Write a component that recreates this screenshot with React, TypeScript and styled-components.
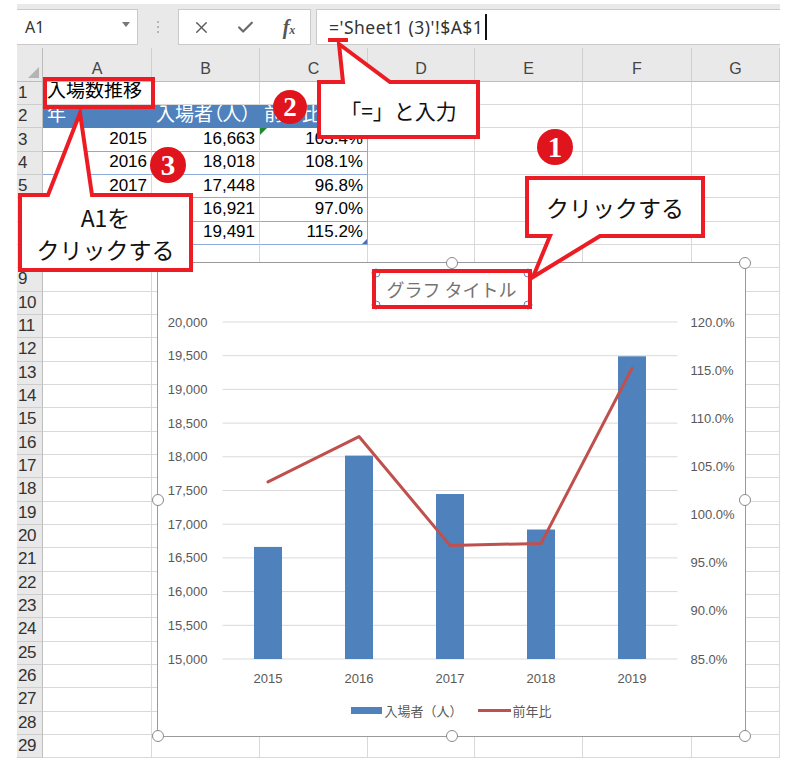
import React from 'react'
import styled, { createGlobalStyle } from 'styled-components'
import { X, Check } from 'lucide-react'

const RED = '#ec1c24'
const COLS = [26, 109, 108, 108, 107, 108, 109, 88]
const LETTERS = ['A', 'B', 'C', 'D', 'E', 'F', 'G']
const ROWS = 29

const GlobalStyle = createGlobalStyle`
  html, body {
    margin: 0;
    padding: 0;
    background: #fff;
  }
  body {
    font-family: "Liberation Sans", "Noto Sans CJK JP", sans-serif;
  }
`

// データ
const years = ['2015', '2016', '2017', '2018', '2019']
const visitors = [16663, 18018, 17448, 16921, 19491]
const ratio = [103.4, 108.1, 96.8, 97.0, 115.2]

type Kind = 'plain' | 'head' | 'body'
type CellData = { text: string; align: 'left' | 'right'; kind: Kind; jp?: boolean; flag?: boolean; grip?: boolean }

const cellAt = (row: number, col: number): CellData => {
  if (row === 1 && col === 0) return { text: '入場数推移', align: 'left', kind: 'plain', jp: true }
  if (row === 2 && col < 3) {
    const heads = ['年', '入場者（人）', '前年比']
    return { text: heads[col], align: 'left', kind: 'head', jp: true }
  }
  if (row >= 3 && row <= 7 && col < 3) {
    const i = row - 3
    const vals = [years[i], visitors[i].toLocaleString('en-US'), ratio[i].toFixed(1) + '%']
    return { text: vals[col], align: 'right', kind: 'body', flag: row === 3 && col === 2, grip: row === 7 && col === 2 }
  }
  return { text: '', align: 'left', kind: 'plain' }
}

export default function App() {
  const rows = Array.from({ length: ROWS }, (_, i) => i + 1)
  return (
    <Page>
      <GlobalStyle />
      <Frame>
        <FormulaBar>
          <NameBox>
            <span>A1</span>
            <Caret />
          </NameBox>
          <Grip>
            <i />
            <i />
            <i />
          </Grip>
          <Buttons>
            <X size={19} strokeWidth={1.7} color="#5c5c5c" />
            <Check size={19} strokeWidth={2.8} color="#6a6a6a" />
            <Fx>
              <i>f</i>
              <small>x</small>
            </Fx>
          </Buttons>
          <Input>
            ='Sheet1 (3)'!$A$1
            <Caret2 />
          </Input>
        </FormulaBar>

        <Sheet>
          <Corner />
          {LETTERS.map((l) => (
            <ColHead key={l}>{l}</ColHead>
          ))}
          {rows.map((r) => (
            <React.Fragment key={r}>
              <RowHead>{r}</RowHead>
              {LETTERS.map((_, c) => {
                const d = cellAt(r, c)
                return (
                  <Cell key={c} $kind={d.kind} $align={d.align} $jp={d.jp} $edge={c === 2} $flag={d.flag} $grip={d.grip}>
                    {d.text}
                  </Cell>
                )
              })}
            </React.Fragment>
          ))}
        </Sheet>
      </Frame>

      <Chart>
        <ChartTitle>
          グラフ タイトル
          {[
            [0, 0], [100, 0], [0, 100], [100, 100],
          ].map(([x, y]) => (
            <TitleDot key={`${x}-${y}`} $x={x} $y={y} />
          ))}
        </ChartTitle>
        <PlotSvg />
        <Legend>
          <LegendItem>
            <Swatch $w={31} $h={7} $c="#4f81bd" />
            入場者（人）
          </LegendItem>
          <LegendItem>
            <Swatch $w={33} $h={3} $c="#c0504d" />
            前年比
          </LegendItem>
        </Legend>
        {[
          [0, 0], [50, 0], [100, 0],
          [0, 50], [100, 50],
          [0, 100], [50, 100], [100, 100],
        ].map(([x, y]) => (
          <Handle key={`${x}-${y}`} $x={x} $y={y} />
        ))}
      </Chart>

      <CellMark $x={43} $y={77} $w={112} $h={32} />
      <Underline />

      <Callout $x={317} $y={80} $w={163} $h={59} $size={21}>
        <Shape width={163} height={59}>
          <path d="M2,2 H26 L22,-36 L73,2 H161 V57 H2 Z" />
        </Shape>
        「=」と入力
      </Callout>

      <Callout $x={525} $y={176} $w={180} $h={62} $size={23}>
        <Shape width={180} height={62}>
          <path d="M2,2 H178 V60 H75 L8,101 L25,60 H2 Z" />
        </Shape>
        クリックする
      </Callout>

      <Callout $x={18} $y={193} $w={175} $h={79} $size={23}>
        <Shape width={175} height={79}>
          <path d="M2,2 H30 L62,-80 L74,2 H173 V77 H2 Z" />
        </Shape>
        <span>A1を</span>
        <span>クリックする</span>
      </Callout>

      <Badge $x={555} $y={147} $d={36}>1</Badge>
      <Badge $x={290} $y={107} $d={34}>2</Badge>
      <Badge $x={168} $y={165} $d={36}>3</Badge>
    </Page>
  )
}

// グラフ本体 (SVG)
const PL = 63.5
const PW = 455
const PT = 8
const PB = 345
const yL = (v: number) => PB - ((v - 15000) / 5000) * (PB - PT)
const yR = (p: number) => PB - ((p - 85) / 35) * (PB - PT)
const cx = (i: number) => PL + (PW / 5) * (i + 0.5)

const PlotSvg = () => {
  const leftTicks = Array.from({ length: 11 }, (_, i) => 15000 + i * 500)
  const rightTicks = Array.from({ length: 8 }, (_, i) => 85 + i * 5)
  const line = ratio.map((p, i) => `${cx(i)},${yR(p)}`).join(' ')
  return (
    <Plot width={586} height={375} viewBox="0 0 586 375">
      {leftTicks.map((t) => (
        <line key={t} x1={PL} x2={PL + PW} y1={yL(t)} y2={yL(t)} stroke="#d9d9d9" strokeWidth={1} />
      ))}
      {leftTicks.map((t) => (
        <text key={t} x={48.5} y={yL(t)} dy="0.35em" textAnchor="end">
          {t.toLocaleString('en-US')}
        </text>
      ))}
      {rightTicks.map((t) => (
        <text key={t} x={531.5} y={yR(t)} dy="0.35em">
          {t.toFixed(1)}%
        </text>
      ))}
      {visitors.map((v, i) => (
        <rect key={i} x={cx(i) - 14} y={yL(v)} width={28} height={PB - yL(v)} fill="#4f81bd" />
      ))}
      <polyline points={line} fill="none" stroke="#c0504d" strokeWidth={3} strokeLinejoin="round" strokeLinecap="round" />
      {years.map((y, i) => (
        <text key={y} x={cx(i)} y={364} dy="0.35em" textAnchor="middle">
          {y}
        </text>
      ))}
    </Plot>
  )
}

// Styled Components
const Page = styled.div`
  position: relative;
  width: 800px;
  height: 771px;
  overflow: hidden;
  background: #fff;
`

const Frame = styled.div`
  width: 763px;
  margin-left: 17px;
  padding-top: 4px;
`

const FormulaBar = styled.div`
  display: flex;
  align-items: flex-start;
  height: 44px;
  box-sizing: border-box;
  padding-top: 5px;
  background: #e9e9e9;
`

const NameBox = styled.div`
  box-sizing: border-box;
  width: 121px;
  height: 36px;
  background: #fff;
  border: 1px solid #cacaca;
  border-left: none;
  display: flex;
  align-items: center;
  justify-content: space-between;
  padding: 0 7px 0 8px;
  font-family: "Noto Sans", sans-serif;
  font-size: 16px;
  color: #333;
`

const Caret = styled.span`
  width: 0;
  height: 0;
  border-left: 4px solid transparent;
  border-right: 4px solid transparent;
  border-top: 5px solid #777;
  margin-bottom: 6px;
`

const Grip = styled.div`
  width: 40px;
  height: 36px;
  display: flex;
  flex-direction: column;
  align-items: center;
  justify-content: center;
  gap: 3px;

  i {
    width: 2px;
    height: 2px;
    background: #b5b5b5;
  }
`

const Buttons = styled.div`
  box-sizing: border-box;
  width: 133px;
  height: 36px;
  background: #fff;
  border: 1px solid #cacaca;
  display: grid;
  grid-template-columns: repeat(3, 44px);
  place-items: center;
`

const Fx = styled.span`
  font-family: "Liberation Serif", serif;
  color: #555;
  font-size: 20px;
  font-style: italic;
  font-weight: 700;

  small {
    font-size: 12px;
    font-style: italic;
  }
`

const Input = styled.div`
  box-sizing: border-box;
  flex: 1;
  height: 36px;
  margin-left: 5px;
  background: #fff;
  border: 1px solid #cacaca;
  border-right: none;
  display: flex;
  align-items: center;
  padding-left: 12px;
  font-family: "Noto Sans", sans-serif;
  font-size: 17.5px;
  letter-spacing: 0.5px;
  color: #333;
  white-space: pre;
`

const Caret2 = styled.span`
  width: 2px;
  height: 26px;
  margin-left: 2px;
  background: #111;
`

const Sheet = styled.div`
  display: grid;
  grid-template-columns: ${COLS.map((c) => `${c}px`).join(' ')};
  grid-template-rows: 33.7px repeat(${ROWS}, 23.33px);
`

const Corner = styled.div`
  position: relative;
  background: #e9e9e9;
  border-right: 1px solid #bdbdbd;
  border-bottom: 1px solid #bdbdbd;

  &::after {
    content: '';
    position: absolute;
    right: 3px;
    bottom: 3px;
    border-left: 11px solid transparent;
    border-bottom: 11px solid #b4b4b4;
  }
`

const ColHead = styled.div`
  box-sizing: border-box;
  background: #e9e9e9;
  border-right: 1px solid #cfcfcf;
  border-bottom: 1px solid #bdbdbd;
  display: flex;
  align-items: flex-end;
  justify-content: center;
  padding-bottom: 3px;
  font-size: 16px;
  color: #444;
`

const RowHead = styled.div`
  box-sizing: border-box;
  background: #e9e9e9;
  border-right: 1px solid #bdbdbd;
  border-bottom: 1px solid #cdcdcd;
  display: flex;
  align-items: center;
  padding-left: 1px;
  font-size: 17px;
  letter-spacing: -0.5px;
  color: #333;
`

const BLUE_LINE = '#8eaadb'

const Cell = styled.div<{ $kind: Kind; $align: 'left' | 'right'; $jp?: boolean; $edge?: boolean; $flag?: boolean; $grip?: boolean }>`
  position: relative;
  box-sizing: border-box;
  display: flex;
  align-items: flex-end;
  justify-content: ${(p) => (p.$align === 'right' ? 'flex-end' : 'flex-start')};
  padding: 0 4px 2px;
  overflow: hidden;
  white-space: nowrap;
  line-height: 1.15;
  font-size: ${(p) => (p.$jp ? '19px' : '17px')};
  font-feature-settings: ${(p) => (p.$kind === 'head' ? '"palt"' : 'normal')};
  background: ${(p) => (p.$kind === 'head' ? '#4f81bd' : '#fff')};
  color: ${(p) => (p.$kind === 'head' ? '#fff' : '#000')};
  border-right: 1px solid
    ${(p) => (p.$kind === 'head' ? '#4f81bd' : p.$kind === 'body' && p.$edge ? BLUE_LINE : '#d9d9d9')};
  border-bottom: 1px solid
    ${(p) => (p.$kind === 'head' ? '#4f81bd' : p.$kind === 'body' ? BLUE_LINE : '#d9d9d9')};

  &::before {
    content: '';
    display: ${(p) => (p.$flag ? 'block' : 'none')};
    position: absolute;
    left: 0;
    top: 0;
    border-top: 7px solid #1e8a2e;
    border-right: 7px solid transparent;
  }

  &::after {
    content: '';
    display: ${(p) => (p.$grip ? 'block' : 'none')};
    position: absolute;
    right: 0;
    bottom: 0;
    border-bottom: 5px solid #4f6fb5;
    border-left: 5px solid transparent;
  }
`

const Chart = styled.div`
  position: absolute;
  left: 157px;
  top: 262px;
  width: 589px;
  height: 475px;
  box-sizing: border-box;
  border: 1.5px solid #9a9a9a;
  background: #fff;
  display: flex;
  flex-direction: column;
  align-items: center;
  z-index: 2;
`

const ChartTitle = styled.div`
  position: relative;
  box-sizing: border-box;
  width: 160px;
  height: 40px;
  margin-top: 5.5px;
  border: 4px solid ${RED};
  display: flex;
  align-items: center;
  justify-content: center;
  font-family: "Noto Sans CJK JP", sans-serif;
  font-size: 18px;
  color: #737373;
  white-space: pre;
`

const TitleDot = styled.span<{ $x: number; $y: number }>`
  position: absolute;
  left: ${(p) => p.$x}%;
  top: ${(p) => p.$y}%;
  width: 7px;
  height: 7px;
  transform: translate(-50%, -50%);
  border-radius: 50%;
  background: #fff;
  border: 1px solid #5b86c8;
  z-index: -1;
`

const Plot = styled.svg`
  display: block;
  margin-top: 5px;
  font-family: "Liberation Sans", sans-serif;
  font-size: 13px;
  fill: #595959;

  rect {
    fill: #4f81bd;
  }
`

const Legend = styled.div`
  display: flex;
  align-items: center;
  gap: 15px;
  margin-top: 12px;
  height: 20px;
  font-family: "Noto Sans CJK JP", sans-serif;
  font-size: 13px;
  color: #595959;
`

const LegendItem = styled.div`
  display: flex;
  align-items: center;
  gap: 2px;
`

const Swatch = styled.span<{ $w: number; $h: number; $c: string }>`
  width: ${(p) => p.$w}px;
  height: ${(p) => p.$h}px;
  background: ${(p) => p.$c};
`

const Handle = styled.span<{ $x: number; $y: number }>`
  position: absolute;
  left: ${(p) => p.$x}%;
  top: ${(p) => p.$y}%;
  width: 10px;
  height: 10px;
  transform: translate(-50%, -50%);
  border-radius: 50%;
  background: #fff;
  border: 1.5px solid #8a8a8a;
`

const CellMark = styled.div<{ $x: number; $y: number; $w: number; $h: number }>`
  position: absolute;
  left: ${(p) => p.$x}px;
  top: ${(p) => p.$y}px;
  width: ${(p) => p.$w}px;
  height: ${(p) => p.$h}px;
  box-sizing: border-box;
  border: 4px solid ${RED};
  z-index: 4;
`

const Underline = styled.div`
  position: absolute;
  left: 328px;
  top: 38px;
  width: 20px;
  height: 4px;
  background: ${RED};
  z-index: 6;
`

const Callout = styled.div<{ $x: number; $y: number; $w: number; $h: number; $size: number }>`
  position: absolute;
  left: ${(p) => p.$x}px;
  top: ${(p) => p.$y}px;
  width: ${(p) => p.$w}px;
  height: ${(p) => p.$h}px;
  display: flex;
  flex-direction: column;
  align-items: center;
  justify-content: center;
  font-family: "Noto Sans CJK JP", sans-serif;
  font-size: ${(p) => p.$size}px;
  line-height: 32px;
  color: #111;
  white-space: nowrap;
  z-index: 5;
  isolation: isolate;
`

const Shape = styled.svg`
  position: absolute;
  left: 0;
  top: 0;
  overflow: visible;
  z-index: -1;

  path {
    fill: #fff;
    stroke: ${RED};
    stroke-width: 4;
    stroke-linejoin: miter;
  }
`

const Badge = styled.div<{ $x: number; $y: number; $d: number }>`
  position: absolute;
  left: ${(p) => p.$x - p.$d / 2}px;
  top: ${(p) => p.$y - p.$d / 2}px;
  width: ${(p) => p.$d}px;
  height: ${(p) => p.$d}px;
  border-radius: 50%;
  background: #e0141c;
  color: #fff;
  display: flex;
  align-items: center;
  justify-content: center;
  font-family: "Liberation Serif", serif;
  font-weight: 700;
  font-size: ${(p) => Math.round(p.$d * 0.8)}px;
  line-height: 1;
  z-index: 6;
`
